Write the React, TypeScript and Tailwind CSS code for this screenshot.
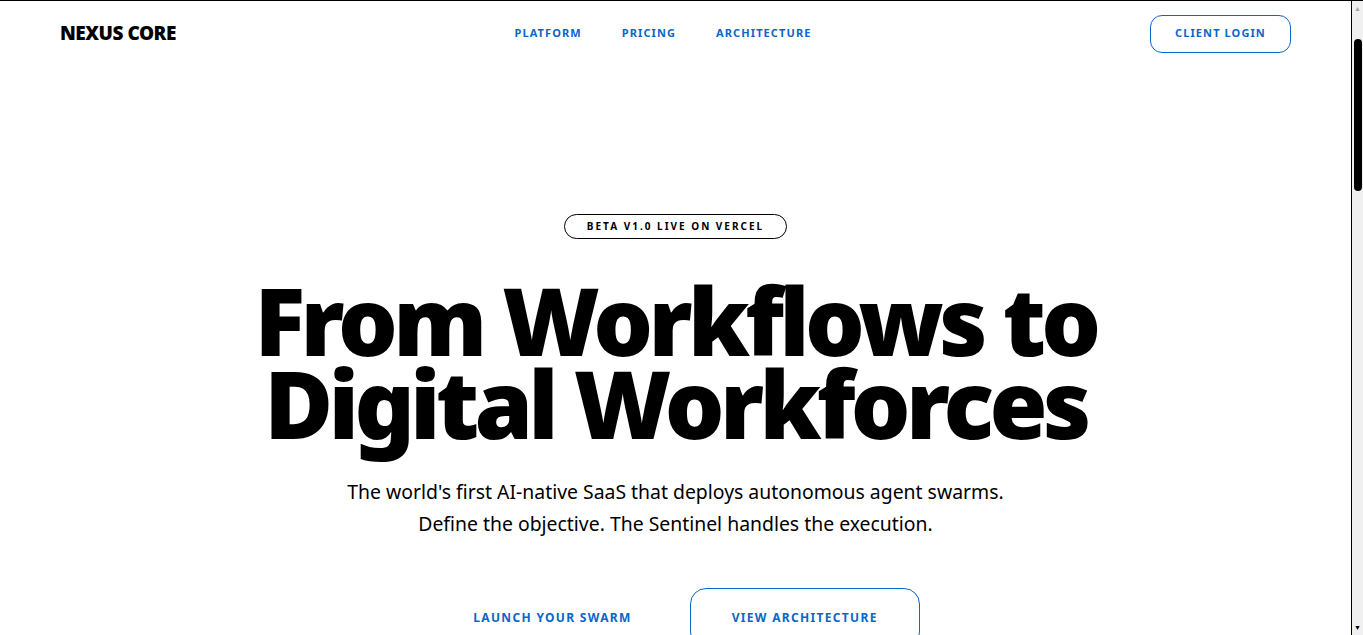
// thin rail on the right edge of the page, with its thumb
function ScrollRail() {
  return (
    <div className="w-3 shrink-0 h-full flex flex-col items-center bg-[#f0f0f0] border-l border-black">
      <span className="mt-[4px] text-[7px] leading-none text-[#a3a3a3]">▲</span>
      <div className="mt-[27px] h-[152px] w-[8px] rounded-full bg-black" />
      <span className="mt-auto mb-[4px] text-[7px] leading-none text-black">▼</span>
    </div>
  );
}

export default function App() {
  return (
    <div className="h-screen flex bg-white text-black border-t border-black font-['Noto_Sans',sans-serif]">
      <div className="flex-1 h-full overflow-y-auto">
        <header className="flex items-center justify-between px-[60px] h-[65px]">
          <a href="#" className="text-[19px] font-black tracking-tight">
            NEXUS CORE
          </a>
          <nav className="flex items-center gap-10 text-[11px] font-bold tracking-widest text-[#0a66c8]">
            <a href="#">PLATFORM</a>
            <a href="#">PRICING</a>
            <a href="#">ARCHITECTURE</a>
          </nav>
          <button className="h-[38px] w-[141px] rounded-xl border border-[#0a66c8] text-[11px] font-bold tracking-widest text-[#0a66c8]">
            CLIENT LOGIN
          </button>
        </header>

        <main className="flex flex-col items-center text-center pt-[148px]">
          <span className="rounded-full border border-black px-[22px] py-[4px] text-[10px] font-bold tracking-[0.2em]">
            BETA V1.0 LIVE ON VERCEL
          </span>

          <h1 className="mt-10 text-[94px] leading-[0.88] font-black tracking-tighter">
            From Workflows to
            <br />
            Digital Workforces
          </h1>

          <p className="mt-8 text-[19.4px] leading-8">
            The world's first AI-native SaaS that deploys autonomous agent swarms.
            <br />
            Define the objective. The Sentinel handles the execution.
          </p>

          <div className="mt-12 flex items-center gap-4">
            <button className="px-[41px] py-[21px] rounded-2xl border border-transparent text-xs font-bold tracking-[0.11em] text-[#0a66c8]">
              LAUNCH YOUR SWARM
            </button>
            <button className="px-[41px] py-[21px] rounded-2xl border border-[#0a66c8] text-xs font-bold tracking-[0.11em] text-[#0a66c8]">
              VIEW ARCHITECTURE
            </button>
          </div>

          <div className="h-40" />
        </main>
      </div>
      <ScrollRail />
    </div>
  );
}
